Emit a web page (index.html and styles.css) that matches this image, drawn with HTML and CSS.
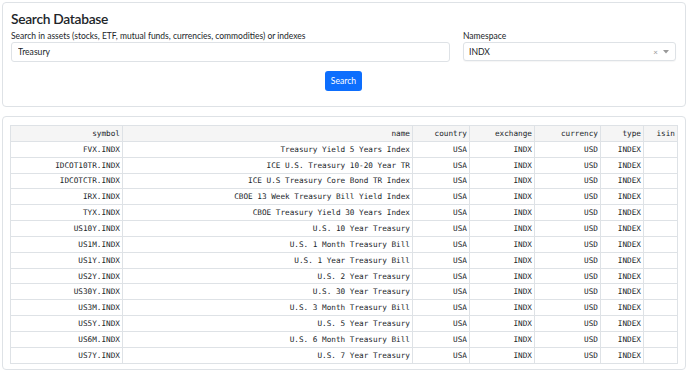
FILE: index.html
```html
<!DOCTYPE html>
<html lang="en">

<head>
    <meta charset="UTF-8">
    <meta name="viewport" content="width=device-width, initial-scale=1.0">
    <title>Search Database</title>
    <link rel="stylesheet" href="styles.css">
</head>

<body>
    <div class="card search-card">
        <h4 class="card-title">Search Database</h4>
        <div class="search-row">
            <div class="field">
                <label for="query">Search in assets (stocks, ETF, mutual funds, currencies, commodities) or indexes</label>
                <input type="text" id="query" class="form-control" value="Treasury">
            </div>
            <div class="field">
                <label>Namespace</label>
                <div class="select-box">
                    <span class="select-value">INDX</span>
                    <span class="select-clear">&times;</span>
                    <svg class="select-caret" width="6" height="4" viewBox="0 0 6 4">
                        <path d="M0 0 L6 0 L3 3.5 Z" fill="#999"></path>
                    </svg>
                </div>
            </div>
        </div>
        <div class="actions">
            <button class="btn-search">Search</button>
        </div>
    </div>

    <div class="card results-card">
        <table class="results">
            <thead>
                <tr>
                    <th class="col-symbol">symbol</th>
                    <th class="col-name">name</th>
                    <th class="col-country">country</th>
                    <th class="col-exchange">exchange</th>
                    <th class="col-currency">currency</th>
                    <th class="col-type">type</th>
                    <th class="col-isin">isin</th>
                </tr>
            </thead>
            <tbody>
                <tr><td>FVX.INDX</td><td>Treasury Yield 5 Years Index</td><td>USA</td><td>INDX</td><td>USD</td><td>INDEX</td><td></td></tr>
                <tr><td>IDCOT10TR.INDX</td><td>ICE U.S. Treasury 10-20 Year TR</td><td>USA</td><td>INDX</td><td>USD</td><td>INDEX</td><td></td></tr>
                <tr><td>IDCOTCTR.INDX</td><td>ICE U.S Treasury Core Bond TR Index</td><td>USA</td><td>INDX</td><td>USD</td><td>INDEX</td><td></td></tr>
                <tr><td>IRX.INDX</td><td>CBOE 13 Week Treasury Bill Yield Index</td><td>USA</td><td>INDX</td><td>USD</td><td>INDEX</td><td></td></tr>
                <tr><td>TYX.INDX</td><td>CBOE Treasury Yield 30 Years Index</td><td>USA</td><td>INDX</td><td>USD</td><td>INDEX</td><td></td></tr>
                <tr><td>US10Y.INDX</td><td>U.S. 10 Year Treasury</td><td>USA</td><td>INDX</td><td>USD</td><td>INDEX</td><td></td></tr>
                <tr><td>US1M.INDX</td><td>U.S. 1 Month Treasury Bill</td><td>USA</td><td>INDX</td><td>USD</td><td>INDEX</td><td></td></tr>
                <tr><td>US1Y.INDX</td><td>U.S. 1 Year Treasury Bill</td><td>USA</td><td>INDX</td><td>USD</td><td>INDEX</td><td></td></tr>
                <tr><td>US2Y.INDX</td><td>U.S. 2 Year Treasury</td><td>USA</td><td>INDX</td><td>USD</td><td>INDEX</td><td></td></tr>
                <tr><td>US30Y.INDX</td><td>U.S. 30 Year Treasury</td><td>USA</td><td>INDX</td><td>USD</td><td>INDEX</td><td></td></tr>
                <tr><td>US3M.INDX</td><td>U.S. 3 Month Treasury Bill</td><td>USA</td><td>INDX</td><td>USD</td><td>INDEX</td><td></td></tr>
                <tr><td>US5Y.INDX</td><td>U.S. 5 Year Treasury</td><td>USA</td><td>INDX</td><td>USD</td><td>INDEX</td><td></td></tr>
                <tr><td>US6M.INDX</td><td>U.S. 6 Month Treasury Bill</td><td>USA</td><td>INDX</td><td>USD</td><td>INDEX</td><td></td></tr>
                <tr><td>US7Y.INDX</td><td>U.S. 7 Year Treasury</td><td>USA</td><td>INDX</td><td>USD</td><td>INDEX</td><td></td></tr>
            </tbody>
        </table>
    </div>
</body>

</html>
```

FILE: styles.css
```css
body {
    margin: 0;
    padding: 2px 3px 0 2px;
    font-family: Lato, "Open Sans", sans-serif;
    color: #212529;
    background-color: #fff;
}

.card {
    border: 1px solid #dee2e6;
    border-radius: 4px;
    background-color: #fff;
}

.search-card {
    height: 105px;
    box-sizing: border-box;
    padding: 6px 9px 0 8px;
}

.card-title {
    margin: 0;
    font-size: 13.8px;
    font-weight: 600;
    line-height: 19px;
    letter-spacing: -0.3px;
}

.search-row {
    display: grid;
    grid-template-columns: 439px 213px;
    column-gap: 13px;
    margin-top: 3px;
}

.field label {
    display: block;
    font-size: 8.5px;
    line-height: 11px;
    margin-bottom: 0;
}

.form-control,
.select-box {
    display: block;
    box-sizing: border-box;
    width: 100%;
    height: 20px;
    margin: 0;
    border: 1px solid #dee2e6;
    border-radius: 3px;
    background-color: #fff;
    font-family: Lato, "Open Sans", sans-serif;
    font-size: 8.6px;
    color: #212529;
    padding: 0 6px;
    outline: none;
}

.select-box {
    display: flex;
    align-items: center;
    height: 19px;
    padding: 0 5px 0 5px;
    box-shadow: 0 1px 1px rgba(0, 0, 0, 0.04);
}

.select-value {
    flex: 1;
}

.select-clear {
    color: #999;
    font-size: 8px;
    margin-right: 5px;
}

.select-caret {
    margin-right: 1px;
}

.actions {
    display: flex;
    justify-content: center;
    margin-top: 9px;
}

.btn-search {
    width: 37px;
    height: 20px;
    padding: 0;
    border: none;
    border-radius: 3px;
    background-color: #0d6efd;
    color: #fff;
    font-family: Lato, "Open Sans", sans-serif;
    font-size: 8.6px;
}

.results-card {
    margin-top: 9px;
    height: 254px;
    box-sizing: border-box;
    padding: 8px 8px 0 7px;
}

.results {
    border-collapse: collapse;
    table-layout: fixed;
    width: 667px;
    font-family: "DejaVu Sans Mono", monospace;
    font-size: 7.7px;
    color: #212529;
}

.results th,
.results td {
    box-sizing: border-box;
    border: 1px solid #dee2e6;
    text-align: right;
    padding: 0 2px;
    white-space: nowrap;
    overflow: hidden;
}

.results th {
    font-weight: normal;
    background-color: #f5f5f5;
}

.results tr {
    height: 15.85px;
}

.col-symbol { width: 112px; }
.col-name { width: 290px; }
.col-country { width: 57px; }
.col-exchange { width: 65px; }
.col-currency { width: 66px; }
.col-type { width: 43px; }
.col-isin { width: 34px; }
```
